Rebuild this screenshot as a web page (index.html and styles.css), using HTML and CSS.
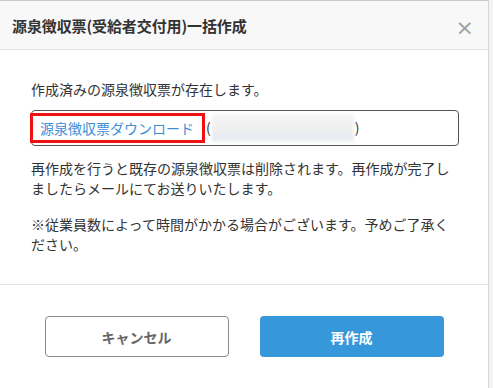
FILE: index.html
```html
<!DOCTYPE html>
<html lang="ja">
  <head>
    <meta charset="UTF-8" />
    <meta name="viewport" content="width=device-width, initial-scale=1.0" />
    <title>源泉徴収票(受給者交付用)一括作成</title>
    <link rel="stylesheet" href="styles.css">
  </head>
  <body>
    <div class="modal">
      <div class="modal-header">
        <h3>源泉徴収票(受給者交付用)一括作成</h3>
        <button type="button" class="close">&times;</button>
      </div>
      <div class="modal-body">
        <p class="lead">作成済みの源泉徴収票が存在します。</p>
        <div class="download-box">
          <a href="#" class="download-link">源泉徴収票ダウンロード</a>
          <span class="paren">(</span><span class="masked"></span><span class="paren">)</span>
        </div>
        <p>再作成を行うと既存の源泉徴収票は削除されます。再作成が完了しましたらメールにてお送りいたします。</p>
        <p class="note">※従業員数によって時間がかかる場合がございます。予めご了承ください。</p>
      </div>
      <div class="modal-footer">
        <button type="button" class="btn btn-cancel">キャンセル</button>
        <button type="button" class="btn btn-primary">再作成</button>
      </div>
    </div>
  </body>
</html>
```

FILE: styles.css
```css
body {
  margin: 0;
  padding: 0;
  background: #f2f2f2;
  font-family: "Noto Sans CJK JP", "Noto Sans", sans-serif;
  color: #333;
}

.modal {
  width: 488px;
  height: 387px;
  background: white;
  border-top: 1px solid #c8c8c8;
  border-right: 1px solid #d6d6d6;
  display: flex;
  flex-direction: column;
}

.modal-header {
  height: 48px;
  background: #f8f8f8;
  border-bottom: 1px solid #e3e3e3;
  display: flex;
  align-items: center;
  justify-content: space-between;
  padding: 0 14px 0 12px;
}

.modal-header h3 {
  margin: 0;
  font-size: 15px;
  font-weight: 700;
  color: #333;
  letter-spacing: -0.1px;
}

.close {
  border: none;
  background: none;
  padding: 0;
  font-size: 22px;
  line-height: 1;
  color: #a0a0a0;
  font-family: "DejaVu Sans", sans-serif;
  margin-top: 6px;
}

.modal-body {
  flex: 1;
  padding: 29px 28px 0 31px;
  font-size: 14px;
  line-height: 20.5px;
  border-bottom: 1px solid #e3e3e3;
}

.modal-body p {
  margin: 0;
}

.download-box {
  width: 426px;
  margin: 10px 0 12px;
  height: 34px;
  border: 1.5px solid #555;
  border-radius: 4px;
  display: flex;
  align-items: center;
  position: relative;
}

.download-link {
  color: #3d8fd9;
  text-decoration: none;
  font-size: 14px;
  padding: 1px 8px 0 7px;
  margin-left: -2px;
  height: 23px;
  line-height: 23px;
  border: 3px solid #ee1111;
}

.paren {
  color: #333;
  padding: 0 1px;
}

.masked {
  width: 142px;
  height: 28px;
  background: linear-gradient(#f4f4f4, #eeeeee 60%, #e6ebf2 80%, #f0f0f0);
  filter: blur(1.5px);
}

.note {
  margin-top: 15px !important;
}

.modal-footer {
  height: 103px;
  display: flex;
  justify-content: center;
  gap: 31px;
  padding-top: 31px;
  box-sizing: border-box;
}

.btn {
  width: 184px;
  height: 41px;
  border-radius: 4px;
  font-family: inherit;
  font-size: 14px;
  font-weight: 700;
  cursor: pointer;
}

.btn-cancel {
  background: white;
  border: 1.5px solid #8a8a8a;
  color: #666;
}

.btn-primary {
  background: #3797db;
  border: none;
  color: white;
}
```
